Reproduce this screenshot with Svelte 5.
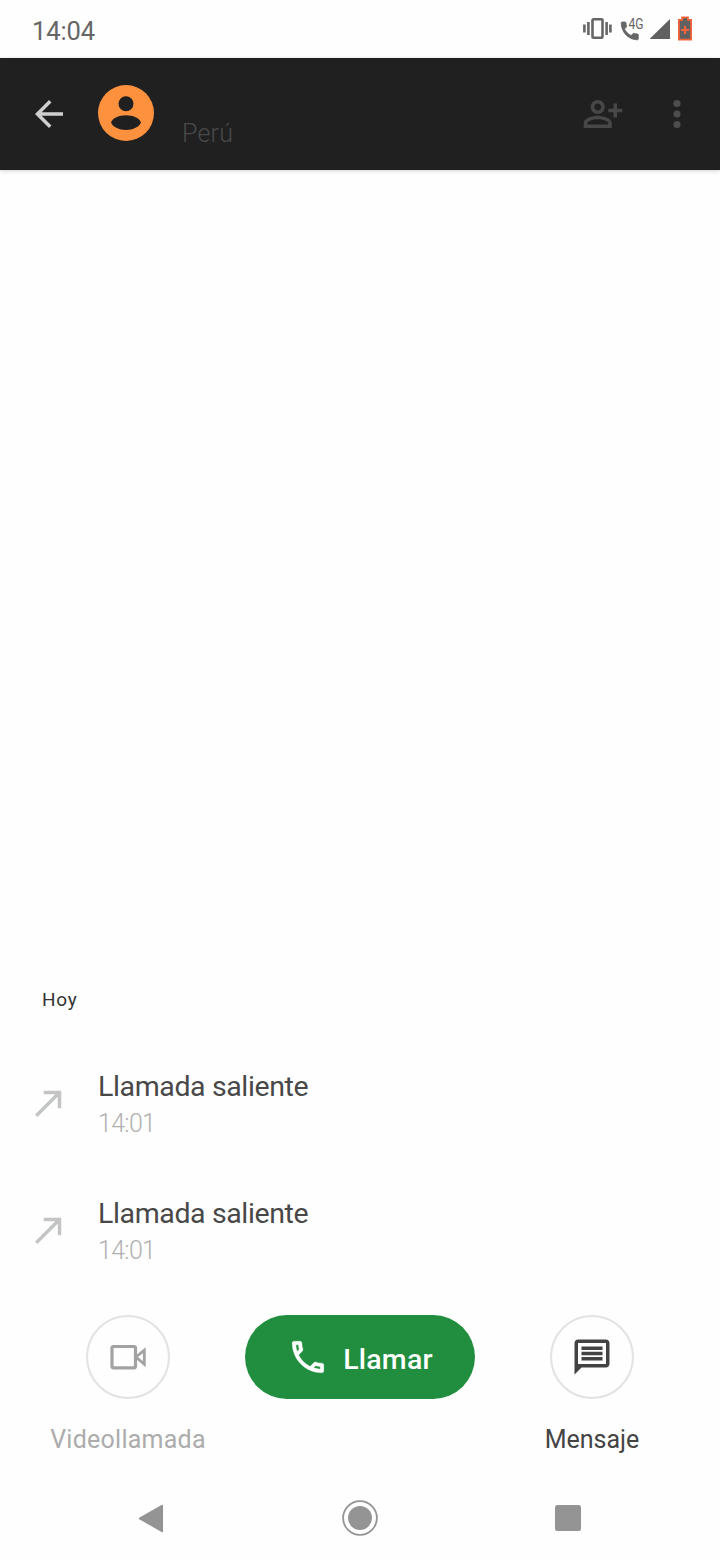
<script>
  /** @type {{contact?: {place: string}, time?: string}} */
  let { contact = { place: 'Perú' }, time = '14:04' } = $props();

  const calls = [
    { id: 1, type: 'Llamada saliente', at: '14:01' },
    { id: 2, type: 'Llamada saliente', at: '14:01' }
  ];
</script>

<div class="screen">
  <div class="status-bar">
    <span class="clock">{time}</span>
    <svg class="status-icons" width="114" height="30" viewBox="0 0 114 30">
      <g fill="none" stroke="#666" stroke-width="2.6">
        <rect x="12.5" y="5.3" width="10" height="18.4" rx="1" />
        <path d="M8.4 8v13M4.4 10.5v8M26.6 8v13M30.4 10.5v8" />
      </g>
      <path
        fill="#666"
        stroke="#666"
        stroke-width="0.8"
        transform="translate(40.3 7)"
        d="M17 12.9c-1.1 0-2.2-.2-3.2-.5-.3-.1-.7 0-1 .2l-2 2C7.9 13.1 5.6 10.8 4.2 8.1l1.8-2c.3-.3.4-.7.3-1C5.9 4.1 5.7 3 5.700 1.900c0-.5-.4-.9-.9-.9H2C1.300 1 .9 1.300.9 1.900.9 11.300 8.200 18.800 17.200 18.800c.6 0 .8-.6.8-1.100v-3.900c0-.5-.5-.9-1-.9z"
      />
      <text x="48.5" y="15" class="network" textLength="15" lengthAdjust="spacingAndGlyphs">4G</text>
      <path fill="#606060" d="M70 25v-.5L90 5v20z" />
      <path
        fill="#606060"
        stroke="#f4633a"
        stroke-width="1.8"
        d="M98.9 5.900h3.200V3.300h5.800v2.600h3.200v19.800h-12.200z"
      />
      <path stroke="#f4633a" stroke-width="2.2" d="M101 16h8M105 12v8" />
    </svg>
  </div>

  <header class="app-bar">
    <button class="icon-button" aria-label="Atrás">
      <svg width="42" height="42" viewBox="0 0 24 24" fill="#cfcfcf">
        <path d="M20 11H7.830l5.590-5.590L12 4l-8 8 8 8 1.410-1.410L7.830 13H20v-2z" />
      </svg>
    </button>
    <svg class="avatar" width="56" height="56" viewBox="0 0 56 56">
      <circle cx="28" cy="28" r="28" fill="#fe913e" />
      <circle cx="28" cy="18.8" r="7.5" fill="#202020" />
      <path fill="#202020" d="M13 37.5c1.500-4.500 8-7.300 15-7.300s13.500 2.800 15 7.300c-1.500 4.300-8 7.500-15 7.500s-13.500-3.200-15-7.500z" />
    </svg>
    <span class="place">{contact.place}</span>
    <button class="icon-button" aria-label="Agregar contacto">
      <svg width="42" height="42" viewBox="0 0 24 24" fill="#474747">
        <path
          d="M20 9V6h-2v3h-3v2h3v3h2v-3h3V9h-3zM9 12c2.210 0 4-1.790 4-4s-1.790-4-4-4-4 1.790-4 4 1.790 4 4 4zm0-6c1.100 0 2 .9 2 2s-.9 2-2 2-2-.9-2-2 .9-2 2-2zM9 13c-2.670 0-8 1.340-8 4v3h16v-3c0-2.660-5.330-4-8-4zm6 5H3v-.99C3.200 16.290 6.300 15 9 15s5.800 1.290 6 2v1z"
        />
      </svg>
    </button>
    <button class="icon-button more" aria-label="Más opciones">
      <svg width="42" height="42" viewBox="0 0 24 24" fill="#4d4d4d">
        <circle cx="12" cy="6" r="2.05" />
        <circle cx="12" cy="12" r="2.05" />
        <circle cx="12" cy="18" r="2.05" />
      </svg>
    </button>
  </header>

  <main class="history">
    <h2 class="day">Hoy</h2>
    {#each calls as call (call.id)}
      <div class="call">
        <svg width="42" height="42" viewBox="0 0 24 24" fill="#c3c5c4">
          <path d="M9 5v2h6.590L4 18.590 5.410 20 17 8.410V15h2V5H9z" />
        </svg>
        <div class="call-info">
          <span class="call-type">{call.type}</span>
          <span class="call-time">{call.at}</span>
        </div>
      </div>
    {/each}
  </main>

  <div class="actions">
    <button class="action disabled">
      <span class="circle">
        <svg width="42" height="42" viewBox="0 0 42 42" fill="none" stroke="#a2a2a2" stroke-width="3.2">
          <rect x="5" y="10.5" width="23.5" height="21.3" rx="1.5" />
          <path d="M29 21l8.300-6.800v14z" stroke-width="2.8" />
        </svg>
      </span>
      <span class="label video">Videollamada</span>
    </button>
    <button class="call-button">
      <svg width="42" height="42" viewBox="0 0 24 24" fill="#fff" stroke="#fff" stroke-width="0.2">
        <path
          d="M6.540 5c.06.89.21 1.760.45 2.590l-1.200 1.200c-.41-1.200-.67-2.470-.76-3.790h1.510m9.860 12.020c.85.24 1.720.39 2.600.45v1.490c-1.320-.09-2.590-.35-3.800-.75l1.200-1.190M7.500 3H4c-.55 0-1 .45-1 1 0 9.390 7.610 17 17 17 .55 0 1-.45 1-1v-3.490c0-.55-.45-1-1-1-1.240 0-2.450-.2-3.570-.57-.1-.04-.21-.05-.31-.05-.26 0-.51.1-.71.29l-2.200 2.200c-2.830-1.450-5.150-3.760-6.590-6.590l2.200-2.200c.28-.28.36-.67.25-1.020C8.700 6.450 8.500 5.250 8.500 4c0-.55-.45-1-1-1z"
        />
      </svg>
      <span class="call-label">Llamar</span>
    </button>
    <button class="action">
      <span class="circle">
        <svg width="42" height="42" viewBox="0 0 24 24" fill="#424242">
          <path
            fill-rule="evenodd"
            d="M4 2h16c1.100 0 2 .9 2 2v12c0 1.100-.9 2-2 2H6l-4 4V4c0-1.100.9-2 2-2zm0 2v12h16V4H4zM6 6h12v2H6zM6 9h12v2H6zM6 12h12v2H6z"
          />
        </svg>
      </span>
      <span class="label">Mensaje</span>
    </button>
  </div>

  <nav class="nav-bar">
    <svg width="26" height="30" viewBox="0 0 26 30">
      <path fill="#949494" stroke="#949494" stroke-width="1.5" stroke-linejoin="round" d="M1.500 15.500L24.300 2.500v26z" />
    </svg>
    <svg width="36" height="36" viewBox="0 0 36 36">
      <circle cx="18" cy="18" r="16.9" fill="none" stroke="#949494" stroke-width="1.8" />
      <circle cx="18" cy="18" r="12" fill="#949494" />
    </svg>
    <svg width="26" height="26" viewBox="0 0 26 26">
      <rect width="26" height="26" rx="2.5" fill="#949494" />
    </svg>
  </nav>
</div>

<style>
  :global(body) {
    background: #fefefe;
  }

  .screen {
    display: flex;
    flex-direction: column;
    width: 720px;
    height: 1560px;
    background: #fefefe;
    font-family: Roboto, 'Liberation Sans', sans-serif;
    overflow: hidden;
  }

  button {
    padding: 0;
    border: none;
    background: none;
    color: inherit;
    font: inherit;
    cursor: pointer;
  }

  svg {
    display: block;
    flex: none;
  }

  .status-bar {
    display: flex;
    justify-content: space-between;
    box-sizing: border-box;
    height: 58px;
    padding: 14px 26px 0 32px;
  }

  .clock {
    font-size: 25.5px;
    letter-spacing: -0.1px;
    line-height: 34px;
    color: #666;
  }

  .network {
    font-size: 14px;
    fill: #666;
  }

  .app-bar {
    display: flex;
    align-items: center;
    box-sizing: border-box;
    height: 112px;
    padding: 0 22px 0 28px;
    background: #202020;
    box-shadow: 0 1px 4px rgba(0, 0, 0, 0.18);
  }

  .avatar {
    margin: -2px 0 0 28px;
  }

  .place {
    flex: 1;
    margin-left: 28px;
    padding-top: 39px;
    font-size: 25px;
    font-weight: 300;
    letter-spacing: 0.2px;
    line-height: 30px;
    color: #4a4a4a;
  }

  .more {
    margin-left: 32px;
  }

  .history {
    display: flex;
    flex: 1;
    flex-direction: column;
    justify-content: flex-end;
    padding-bottom: 22px;
  }

  .day {
    margin: 0 0 27px;
    padding-left: 42px;
    font-size: 19px;
    font-weight: 400;
    letter-spacing: 0.8px;
    line-height: 24px;
    color: #333;
  }

  .call {
    display: flex;
    align-items: center;
    gap: 28px;
    height: 127px;
    padding-left: 28px;
  }

  .call-info {
    display: flex;
    flex-direction: column;
    padding-top: 4px;
  }

  .call-type {
    font-size: 28.5px;
    letter-spacing: -0.38px;
    line-height: 38px;
    color: #484848;
  }

  .call-time {
    font-size: 25px;
    font-weight: 300;
    letter-spacing: -0.7px;
    line-height: 36px;
    color: #b0b0b0;
  }

  .actions {
    display: flex;
    justify-content: space-between;
    height: 160px;
    padding: 0 28px;
  }

  .action {
    display: flex;
    flex-direction: column;
    align-items: center;
    width: 200px;
    color: #444;
  }

  .circle {
    display: flex;
    align-items: center;
    justify-content: center;
    box-sizing: border-box;
    width: 84px;
    height: 84px;
    border: 2px solid #e2e2e2;
    border-radius: 50%;
  }

  .label {
    margin-top: 25px;
    font-size: 25px;
    line-height: 32px;
  }

  .video {
    letter-spacing: 0.25px;
  }

  .disabled {
    color: #acacac;
  }

  .call-button {
    display: flex;
    align-items: center;
    justify-content: center;
    gap: 14px;
    width: 230px;
    height: 84px;
    border-radius: 42px;
    background: #208e3e;
    color: #fff;
  }

  .call-label {
    padding-top: 4px;
    font-size: 28.5px;
    font-weight: 500;
    letter-spacing: 0.2px;
  }

  .nav-bar {
    display: flex;
    align-items: center;
    justify-content: space-between;
    height: 85px;
    padding: 0 139px 0 138px;
  }
</style>
